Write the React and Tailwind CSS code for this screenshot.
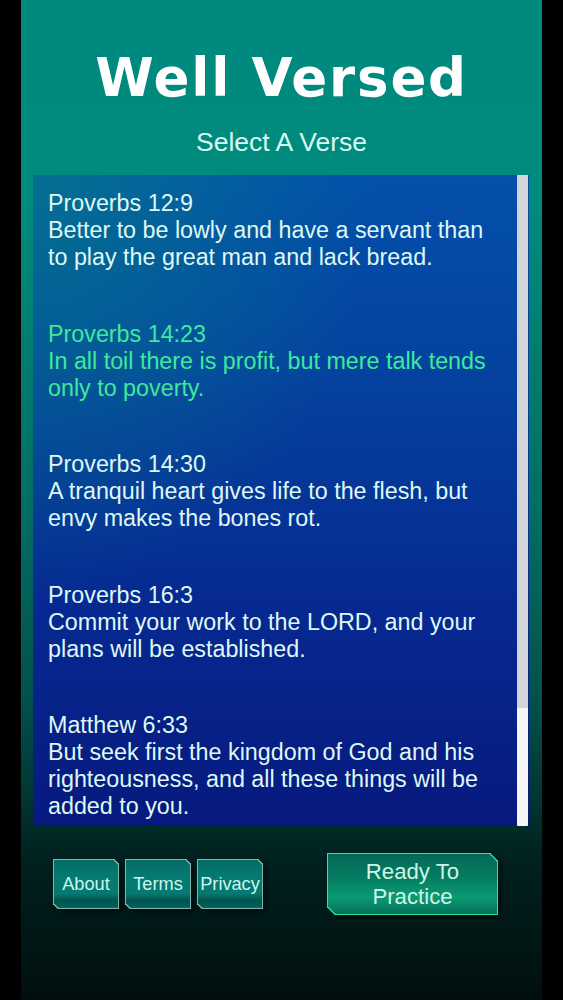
const verses = [
  { ref: 'Proverbs 12:9', lines: ['Better to be lowly and have a servant than', 'to play the great man and lack bread.'] },
  { ref: 'Proverbs 14:23', lines: ['In all toil there is profit, but mere talk tends', 'only to poverty.'], active: true },
  { ref: 'Proverbs 14:30', lines: ['A tranquil heart gives life to the flesh, but', 'envy makes the bones rot.'] },
  { ref: 'Proverbs 16:3', lines: ['Commit your work to the LORD, and your', 'plans will be established.'] },
  { ref: 'Matthew 6:33', lines: ['But seek first the kingdom of God and his', 'righteousness, and all these things will be', 'added to you.'] },
];

function SmallButton({ label }) {
  return (
    <button className="w-[66px] h-[50px] pt-[2px] flex items-center justify-center text-[18.2px] text-[#cdf5f0] border border-[#7fb5ae] rounded-tr-[5px] rounded-bl-[5px] [corner-shape:bevel] bg-[linear-gradient(to_bottom,#056c66_0%,#047a70_35%,#047a70_70%,#03504c_85%,#046560_100%)] shadow-[3px_3px_5px_rgba(0,0,0,0.5)]">
      {label}
    </button>
  );
}

export default function App() {
  return (
    <div className="h-[1000px] bg-black flex justify-center font-['Liberation_Sans',Arial,sans-serif] overflow-hidden">
      <div className="w-[521px] h-full flex flex-col bg-[linear-gradient(to_bottom,#00897f_0%,#008b7c_20%,#026f63_50%,#02514c_70%,#013532_80%,#01211f_86%,#000f0e_100%)]">
        {/* Title */}
        <h1 className="mt-[48px] h-[60px] text-center text-[53px] leading-[60px] font-bold tracking-[1.8px] text-white font-['DejaVu_Sans',sans-serif]">
          Well Versed
        </h1>
        <p className="mt-[19px] h-[30px] text-center text-[26.5px] leading-[30px] text-[#d8f8f3]">Select A Verse</p>

        {/* Verse list */}
        <div className="mt-[18px] ml-[12px] w-[496px] h-[651px] flex bg-[radial-gradient(ellipse_340px_420px_at_0%_0%,rgba(4,125,135,0.7)_0%,rgba(4,110,140,0)_100%),linear-gradient(to_bottom,#0350ab_0%,#04429f_30%,#062a92_65%,#07197e_100%)]">
          <div className="flex-1 pl-[15px] pt-[15px] text-[23.3px] leading-[27px] flex flex-col gap-[49.5px] text-[#dff8f5] overflow-hidden">
            {verses.map((v) => (
              <div key={v.ref} className={v.active ? 'text-[#3fe89c]' : ''}>
                <div>{v.ref}</div>
                {v.lines.map((l) => <div key={l} className="whitespace-nowrap">{l}</div>)}
              </div>
            ))}
          </div>
          <div className="w-[11px] mr-px h-full bg-[#f6f6f8] rounded-[1px]">
            <div className="h-[533px] bg-[#d4d5da] rounded-t-[2px]" />
          </div>
        </div>

        {/* Bottom buttons */}
        <div className="mt-[33px] flex items-start">
          <div className="ml-[32px] flex gap-[6px]">
            <SmallButton label="About" />
            <SmallButton label="Terms" />
            <SmallButton label="Privacy" />
          </div>
          <button className="ml-[64px] -mt-[6px] w-[171px] h-[62px] pb-[1px] text-[22.2px] leading-[25px] text-[#cdf5e8] border border-[#2fe0a0] rounded-tr-[8px] rounded-bl-[8px] [corner-shape:bevel] bg-[linear-gradient(to_bottom,#046a58_0%,#067c62_40%,#0a9a72_72%,#04705a_100%)] shadow-[3px_3px_5px_rgba(0,0,0,0.5)]">
            Ready To<br />Practice
          </button>
        </div>
      </div>
    </div>
  );
}
